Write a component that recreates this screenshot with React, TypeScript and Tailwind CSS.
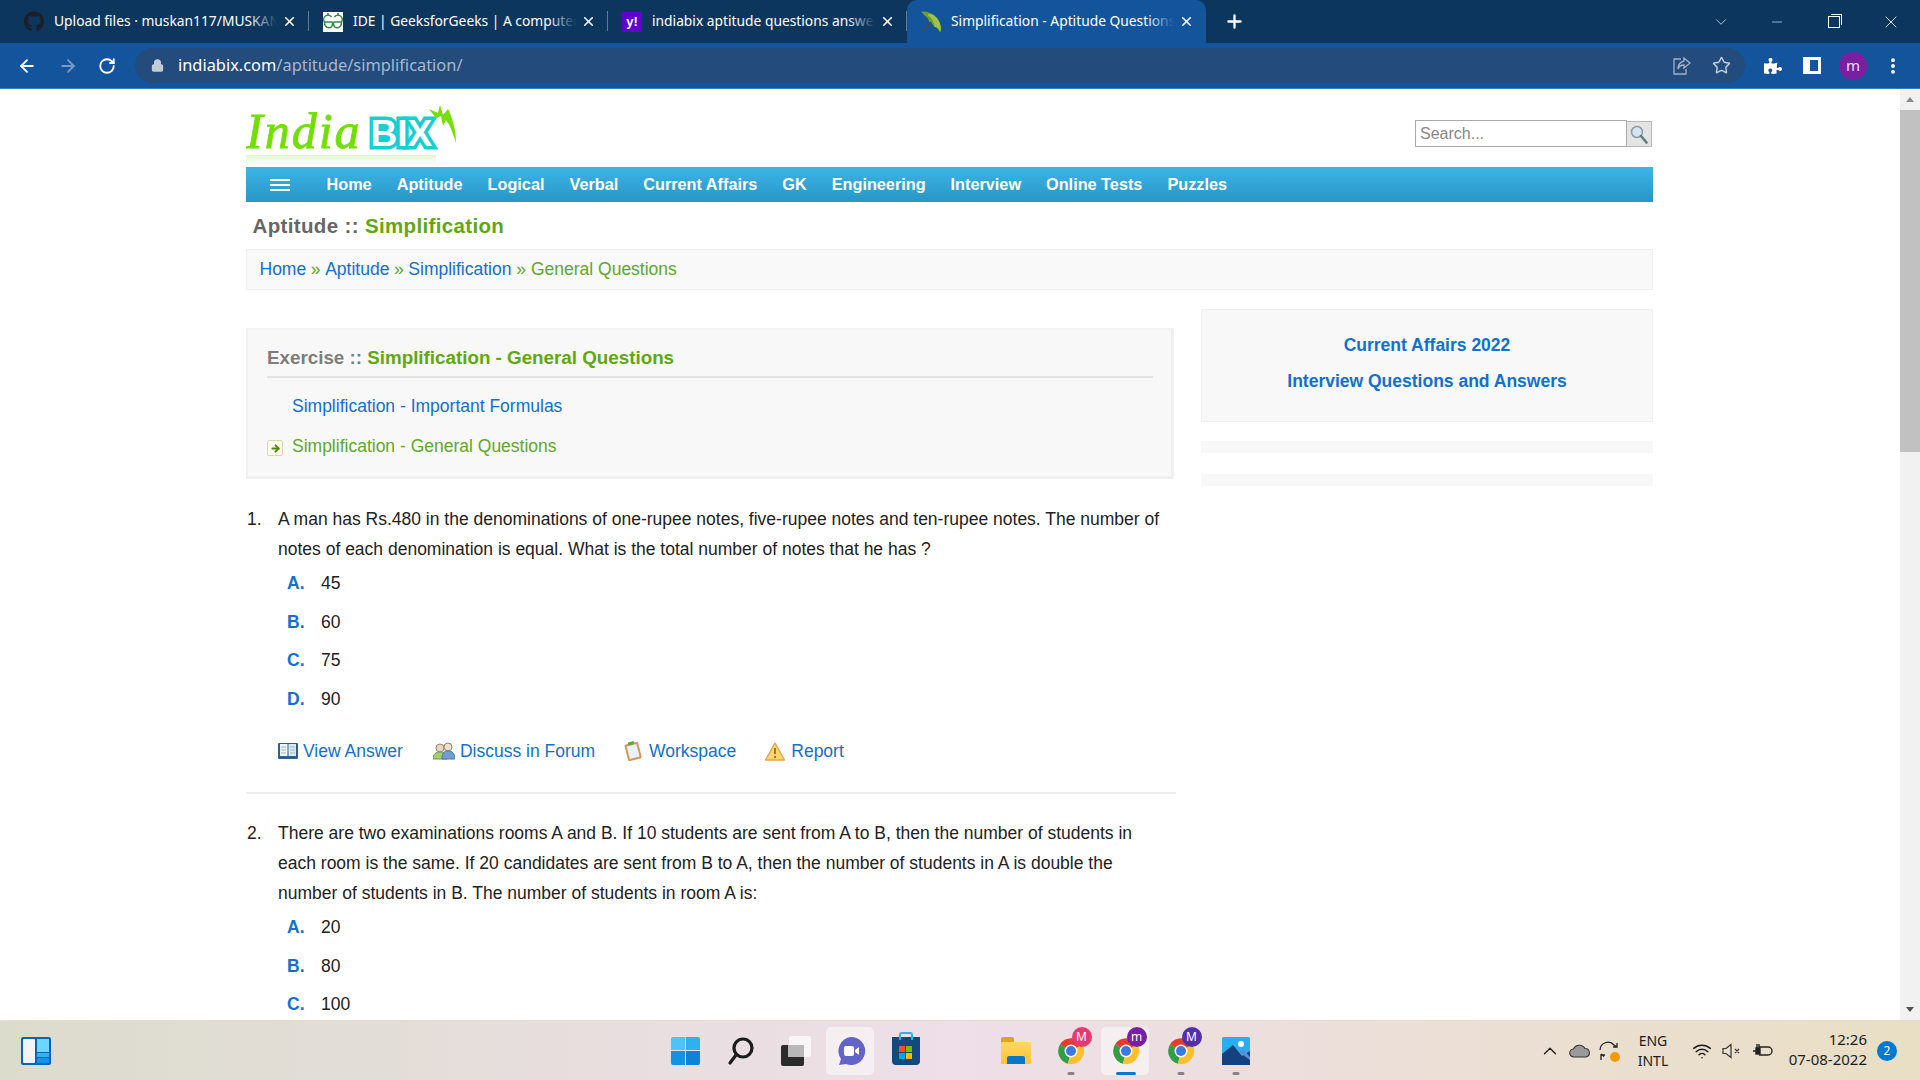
import React from "react";
import { FaGithub, FaPuzzlePiece } from "react-icons/fa";
import { ArrowLeft, ArrowRight, RotateCw, Lock, X, Plus, ChevronDown, Minus, Star, ChevronUp, Wifi, MoreVertical } from "lucide-react";

const GfgIcon = () => (
  <svg width="20" height="20" viewBox="0 0 20 20" className="bg-white shrink-0">
    <g fill="none" stroke="#2f8d46" strokeWidth="1.5">
      <path d="M9.500 10H1.500a4 4 0 0 1 7-5" />
      <path d="M10.500 10h8a4 4 0 0 0-7-5" />
      <path d="M1.500 10c0 7 8 8 8 1.500V10" />
      <path d="M18.500 10c0 7-8 8-8 1.500V10" />
      <path d="M5 1v3M15 1v3" />
    </g>
  </svg>
);

const Umbrella = () => (
  <svg width="22" height="24" viewBox="0 0 22 24" className="shrink-0">
    <path d="M1 2c7-2 16 3 20 15 .5 2 0 4-1 5-1-3-3-5-6-5-1-3-3-5-5-5 0-3-2-5-4-6-1-2-3-3-4-4z" fill="#6f9e2c" />
    <path d="M7 5c3 1 6 4 8 12 2 0 4 2 5 5 2-5 0-11-4-15-3-3-6-4-9-2z" fill="#9cc63f" />
    <path d="M11 12l-6 8c-1 1-2 1-3 0" fill="none" stroke="#454f40" strokeWidth="1.4" />
  </svg>
);

function Tab({ icon, title, active }: { icon: React.ReactNode; title: string; active?: boolean }) {
  return (
    <div className={"relative flex h-full w-[299px] items-center pl-[14px] pr-[10px] " + (active ? "rounded-t-[10px] bg-[#14549c]" : "")}>
      <div className="flex w-[20px] shrink-0 justify-center">{icon}</div>
      <div className="relative ml-[10px] -mt-[2px] h-[20px] w-[223px] overflow-hidden whitespace-nowrap text-[13.8px] leading-[20px] text-white">
        {title}
        <div className={"absolute inset-y-0 right-0 w-[28px] bg-gradient-to-r from-transparent " + (active ? "to-[#14549c]" : "to-[#0d365f]")} />
      </div>
      <X size={15} strokeWidth={2.6} className="ml-[5px] shrink-0 text-white" />
      {!active && <div className="absolute right-0 top-[11px] h-[20px] w-px bg-[#5d7c9b]" />}
    </div>
  );
}

function TabStrip() {
  return (
    <div className="flex h-[43px] items-end bg-[#0d365f] pl-[10px] font-['Noto_Sans',sans-serif]">
      <div className="flex h-[43px] items-center">
        <Tab icon={<FaGithub size={21} className="text-[#1b1f23]" />} title="Upload files · muskan117/MUSKAN" />
        <Tab icon={<GfgIcon />} title="IDE | GeeksforGeeks | A computer science" />
        <Tab
          icon={<div className="flex h-[20px] w-[20px] items-center justify-center bg-[#6001d2] font-['Liberation_Sans',sans-serif] text-[13px] font-bold leading-none text-white">y!</div>}
          title="indiabix aptitude questions answers"
        />
        <Tab active icon={<Umbrella />} title="Simplification - Aptitude Questions" />
      </div>
      <div className="flex h-[43px] w-[56px] items-center justify-center">
        <Plus size={21} strokeWidth={2.6} className="text-white" />
      </div>
      <div className="ml-auto flex h-[43px] items-center text-[#e6ecf2]">
        <div className="flex w-[57px] justify-center"><ChevronDown size={18} strokeWidth={1} /></div>
        <div className="flex w-[56px] justify-center"><Minus size={16} strokeWidth={1} /></div>
        <div className="flex w-[57px] justify-center">
          <div className="relative h-[12px] w-[12px] border border-white">
            <div className="absolute -right-[3px] -top-[3px] h-[11px] w-[11px] border-r border-t border-white" />
          </div>
        </div>
        <div className="flex w-[58px] justify-center"><X size={20} strokeWidth={1} className="text-white" /></div>
      </div>
    </div>
  );
}

function Toolbar() {
  return (
    <div className="flex h-[46px] items-center border-b border-[#3e78b8] bg-[#14549c] font-['Noto_Sans',sans-serif]">
      <div className="flex w-[135px] items-center">
        <div className="flex w-[54px] justify-center"><ArrowLeft size={20} strokeWidth={2.2} className="text-white" /></div>
        <div className="flex w-[28px] justify-center"><ArrowRight size={20} strokeWidth={2.2} className="text-[#7b9ac0]" /></div>
        <div className="flex w-[53px] justify-center"><RotateCw size={18} strokeWidth={2.4} className="-ml-[3px] text-white" /></div>
      </div>
      <div className="flex h-[35px] w-[1610px] items-center rounded-full bg-[#234b7c]">
        <Lock size={13} strokeWidth={3} className="ml-[16px] fill-[#c3cdd9] text-[#c3cdd9]" />
        <div className="ml-[14px] whitespace-nowrap text-[16.4px] text-white">
          indiabix.com<span className="text-[#a7b8cd]">/aptitude/simplification/</span>
        </div>
        <div className="ml-auto flex items-center pr-[14px]">
          <svg width="20" height="20" viewBox="0 0 20 20" fill="none" stroke="#9fb2c8" strokeWidth="1.3" className="mr-[20px]">
            <path d="M9 3H2v15h12v-5" />
            <path d="M12 2l6 5-6 5V9c-3 0-5 1-6 4 0-4 2-7 6-8z" />
          </svg>
          <Star size={19} strokeWidth={1.8} className="text-[#c3cfdc]" />
        </div>
      </div>
      <div className="flex flex-1 items-center">
        <div className="ml-[18px] flex w-[20px] justify-center"><FaPuzzlePiece size={18} className="text-white" /></div>
        <div className="ml-[20px] h-[17px] w-[18px] border-[3px] border-l-[7px] border-white bg-[#14549c]" />
        <div className="ml-[18px] flex h-[28px] w-[28px] items-center justify-center rounded-full bg-[#7b1fa2] text-[15px] leading-none text-[#f0def5]">m</div>
        <MoreVertical size={20} strokeWidth={2.6} className="ml-[16px] text-white" />
      </div>
    </div>
  );
}

const Logo = () => (
  <div className="relative h-[65px] w-[211px] overflow-hidden">
    <div className="flex h-[54px] items-end">
      <span className="font-['Liberation_Serif',serif] text-[50px] italic leading-[46px] tracking-[2px] text-[#70e000] [-webkit-text-stroke:0.8px_#70e000]">India</span>
      <span className="ml-[9px] font-['Liberation_Sans',sans-serif] text-[37px] font-bold leading-[40px] text-white [paint-order:stroke_fill] [-webkit-text-stroke:7px_#15cfd2]">BIX</span>
    </div>
    <svg width="30" height="40" viewBox="0 0 30 40" className="absolute right-0 top-[3px]">
      <path d="M2 6l9 4 2-8 3 10 5-6c5 10 8 22 8 34-3-10-6-18-10-23l-3 6-2-10-5 2z" fill="#74e000" />
    </svg>
    <div className="absolute left-0 top-[55px] h-[10px] w-[190px] bg-gradient-to-b from-[#e3f7d0] to-white" />
  </div>
);

const navItems = ["Home", "Aptitude", "Logical", "Verbal", "Current Affairs", "GK", "Engineering", "Interview", "Online Tests", "Puzzles"];

const blue = "text-[#1270cf]";

function Opt({ l, v }: { l: string; v: string }) {
  return (
    <div className="flex h-[38.5px] items-center pl-[9px]">
      <span className={"w-[34px] font-bold " + blue}>{l}</span>
      <span>{v}</span>
    </div>
  );
}

const BookIcon = () => (
  <svg width="20" height="18" viewBox="0 0 20 18">
    <rect x="0" y="1" width="20" height="16" rx="1" fill="#2d5f92" />
    <rect x="2" y="2" width="7.500" height="12" fill="#eef3f8" />
    <rect x="10.500" y="2" width="7.500" height="12" fill="#dfe8f1" />
    <path d="M3 5h5M3 8h5M3 11h5M12 5h5M12 8h5M12 11h5" stroke="#9bb" strokeWidth="1" />
  </svg>
);
const PeopleIcon = () => (
  <svg width="22" height="18" viewBox="0 0 22 18">
    <circle cx="7" cy="6" r="4" fill="#f0d6b8" stroke="#8a8a80" />
    <path d="M0 17c0-5 3-7 7-7s7 2 7 7z" fill="#a2d06a" stroke="#7a8a66" />
    <circle cx="15" cy="5" r="4" fill="#f3ddc3" stroke="#8a8a80" />
    <path d="M9 17c0-6 2-8 6-8s7 2 7 8z" fill="#6e9fd6" stroke="#54759c" />
  </svg>
);
const NoteIcon = () => (
  <svg width="20" height="20" viewBox="0 0 20 20">
    <g transform="rotate(-14 10 10)">
      <rect x="3" y="2" width="14" height="17" rx="1.500" fill="#d9955a" />
      <rect x="5" y="4" width="10" height="13" fill="#e6f2f5" />
      <rect x="7" y="0.500" width="6" height="3" fill="#4fae4a" />
    </g>
  </svg>
);
const WarnIcon = () => (
  <svg width="20" height="19" viewBox="0 0 20 19">
    <path d="M10 1l9.500 17H.5z" fill="#f7d774" stroke="#e2a84a" strokeWidth="1.400" strokeLinejoin="round" />
    <path d="M10 6v6" stroke="#b27318" strokeWidth="2" />
    <circle cx="10" cy="15" r="1.200" fill="#b27318" />
  </svg>
);

function Links() {
  return (
    <div className={"mt-[18px] flex h-[30px] items-center pl-[32px] " + blue}>
      <BookIcon />
      <span className="ml-[5px]">View Answer</span>
      <div className="ml-[30px]"><PeopleIcon /></div>
      <span className="ml-[5px]">Discuss in Forum</span>
      <div className="ml-[28px]"><NoteIcon /></div>
      <span className="ml-[6px]">Workspace</span>
      <div className="ml-[29px]"><WarnIcon /></div>
      <span className="ml-[6px]">Report</span>
    </div>
  );
}

function Question({ n, lines }: { n: string; lines: string }) {
  return (
    <div className="flex leading-[30px]">
      <div className="w-[32px] shrink-0 pl-[1px]">{n}</div>
      <div className="w-[888px]">{lines}</div>
    </div>
  );
}

function LeftCol() {
  return (
    <div className="w-[928px] pt-[38px] text-[#222]">
      <div className="h-[151px] border-2 border-b-[3px] border-r-[3px] border-[#f0f0f0] border-t-[#f3f3f3] bg-[#f8f8f8] pl-[19px] pr-[18px]">
        <div className="flex h-[48px] items-end border-b-2 border-[#e2e2e2] pb-[5px] text-[18.8px] font-bold leading-[26px] text-[#7d7d7d]">
          <span>Exercise ::&nbsp;</span><span className="text-[#5fa80e]">Simplification - General Questions</span>
        </div>
        <div className={"mt-[8px] h-[40px] pl-[25px] leading-[40px] " + blue}>Simplification - Important Formulas</div>
        <div className="flex h-[40px] items-center text-[#5fa82a]">
          <div className="mt-[4px] flex h-[16px] w-[16px] items-center justify-center rounded-[2px] border border-[#d8d8b0] bg-[#fcfce8]">
            <ArrowRight size={11} strokeWidth={4} className="text-[#4d8a10]" />
          </div>
          <span className="ml-[9px]">Simplification - General Questions</span>
        </div>
      </div>
      <div className="mt-[25px]">
        <Question n="1." lines="A man has Rs.480 in the denominations of one-rupee notes, five-rupee notes and ten-rupee notes. The number of notes of each denomination is equal. What is the total number of notes that he has ?" />
        <div className="pl-[32px]">
          <Opt l="A." v="45" /><Opt l="B." v="60" /><Opt l="C." v="75" /><Opt l="D." v="90" />
        </div>
        <Links />
        <div className="mt-[26px] h-[2px] w-[930px] bg-[#eeeeee]" />
      </div>
      <div className="mt-[24px]">
        <Question n="2." lines="There are two examinations rooms A and B. If 10 students are sent from A to B, then the number of students in each room is the same. If 20 candidates are sent from B to A, then the number of students in A is double the number of students in B. The number of students in room A is:" />
        <div className="pl-[32px]">
          <Opt l="A." v="20" /><Opt l="B." v="80" /><Opt l="C." v="100" /><Opt l="D." v="200" />
        </div>
      </div>
    </div>
  );
}

function RightCol() {
  return (
    <div className="ml-[27px] w-[452px] pt-[19px]">
      <div className={"flex h-[113px] flex-col items-center justify-center gap-[11px] border border-[#f0f0f0] bg-[#f8f8f8] pb-[5px] font-bold leading-[25px] " + blue}>
        <div>Current Affairs 2022</div>
        <div>Interview Questions and Answers</div>
      </div>
      <div className="mt-[19px] h-[12px] bg-[#f8f8f8]" />
      <div className="mt-[21px] h-[12px] bg-[#f8f8f8]" />
    </div>
  );
}

function Page() {
  return (
    <div className="h-full flex-1 overflow-hidden bg-white font-['Liberation_Sans',sans-serif] text-[17.5px]">
      <div className="ml-[246px] w-[1407px]">
        <div className="flex h-[78px] items-start justify-between pt-[11px]">
          <Logo />
          <div className="mr-[1px] mt-[20px] flex items-end">
            <div className="flex h-[27px] w-[212px] items-center border border-[#aaaaaa] pl-[4px] text-[16px] text-[#888]">Search...</div>
            <div className="flex h-[26px] w-[25px] items-center justify-center border border-l-0 border-[#b8b8b8] bg-[#e4e4e4]">
              <svg width="18" height="19" viewBox="0 0 18 19">
                <circle cx="7" cy="7" r="5.500" fill="#d6e4f2" stroke="#8a9aa0" strokeWidth="1.500" />
                <path d="M11 11l5.500 6.500" stroke="#5f8078" strokeWidth="2.600" strokeLinecap="round" />
              </svg>
            </div>
          </div>
        </div>
        <div className="flex h-[35px] items-center bg-gradient-to-b from-[#3bb5e6] to-[#2896c6] text-[16.25px] font-bold text-white">
          <div className="ml-[24px] flex w-[20px] flex-col gap-[3px]">
            <div className="h-[2px] bg-white" />
            <div className="h-[2px] bg-white" />
            <div className="h-[2px] bg-white" />
          </div>
          <div className="ml-[36.500px] flex gap-[25px]">
            {navItems.map((n) => <span key={n}>{n}</span>)}
          </div>
        </div>
        <div className="flex h-[47px] items-center pl-[6.500px] pt-[2px] text-[20.5px] font-bold tracking-[0.35px] text-[#666]">
          <span>Aptitude ::&nbsp;</span><span className="text-[#5fa80e]">Simplification</span>
        </div>
        <div className={"flex h-[41px] items-center border border-[#f0f0f0] bg-[#f9f9f9] pl-[12.500px] " + blue}>
          <span>Home</span><span className="-mx-[0.25px] text-[#5fa82a]">&nbsp;»&nbsp;</span>
          <span>Aptitude</span><span className="-mx-[0.25px] text-[#5fa82a]">&nbsp;»&nbsp;</span>
          <span>Simplification</span><span className="text-[#5fa82a]">&nbsp;»&nbsp;General Questions</span>
        </div>
        <div className="flex items-start">
          <LeftCol />
          <RightCol />
        </div>
      </div>
    </div>
  );
}

function Scrollbar() {
  return (
    <div className="flex h-full w-[20px] shrink-0 flex-col bg-[#f1f1f1]">
      <div className="flex h-[21px] items-center justify-center">
        <div className="h-0 w-0 border-x-[4px] border-b-[5px] border-x-transparent border-b-[#8a8a8a]" />
      </div>
      <div className="h-[342px] bg-[#c1c1c1]" />
      <div className="mt-auto flex h-[21px] items-center justify-center">
        <div className="h-0 w-0 border-x-[4px] border-t-[5px] border-x-transparent border-t-[#505050]" />
      </div>
    </div>
  );
}

const ChromeIcon = ({ badge, color }: { badge: string; color: string }) => (
  <div className="relative h-[30px] w-[30px]">
    <svg width="28" height="28" viewBox="0 0 28 28" className="absolute left-[1px] top-[1px]">
      <path d="M14 14L3 7.500A13 13 0 0 1 25.300 7.500z" fill="#e33b2e" />
      <path d="M14 14L3 7.500A13 13 0 0 0 11 26.700z" fill="#2f9e44" />
      <path d="M14 14l11.300-6.500A13 13 0 0 1 11 26.700z" fill="#fbc02d" />
      <circle cx="14" cy="14" r="6.500" fill="#fff" />
      <circle cx="14" cy="14" r="5" fill="#3b78e7" />
    </svg>
    <div className={"absolute -right-[6px] -top-[9px] flex h-[20px] w-[20px] items-center justify-center rounded-full text-[12px] leading-none text-white " + color}>{badge}</div>
  </div>
);

const Dot = ({ active }: { active?: boolean }) => (
  <div className={"absolute bottom-[6px] left-1/2 h-[3px] -translate-x-1/2 rounded-full " + (active ? "w-[20px] bg-[#0078d4]" : "w-[7px] bg-[#85808a]")} />
);

function Slot({ children, hi, dot, active }: { children?: React.ReactNode; hi?: boolean; dot?: boolean; active?: boolean }) {
  return (
    <div className="relative flex h-[60px] w-[55px] items-center justify-center">
      {hi && <div className="absolute left-[3px] top-[6px] h-[48px] w-[48px] rounded-[5px] bg-white/50" />}
      <div className="relative flex items-center justify-center">{children}</div>
      {dot && <Dot active={active} />}
    </div>
  );
}

function Taskbar() {
  return (
    <div className="flex h-[60px] items-center border-t border-[#e3ddd0] bg-gradient-to-r from-[#dcdccd] via-[#eedfe8] to-[#e9dfc4] font-['Noto_Sans',sans-serif] text-[#222]">
      <div className="ml-[21px] flex h-[28px] w-[30px] gap-[2px] rounded-[2px] bg-[#0a63b4] p-[2px]">
        <div className="w-[12px] rounded-[1px] bg-[#f3f3f3]" />
        <div className="flex flex-1 flex-col gap-px">
          <div className="flex-[3] bg-[#6dd6ff]" />
          <div className="flex-1 bg-[#31b2f5]" />
          <div className="flex-1 bg-[#1493e8]" />
        </div>
      </div>
      <div className="ml-[607px] flex">
        <Slot>
          <div className="grid h-[28px] w-[29px] grid-cols-2 gap-[1px]">
            <div className="rounded-tl-[2px] bg-[#4cc4f7]" /><div className="rounded-tr-[2px] bg-[#2fb0f0]" />
            <div className="rounded-bl-[2px] bg-[#1493e6]" /><div className="rounded-br-[2px] bg-[#0e82d8]" />
          </div>
        </Slot>
        <Slot>
          <svg width="28" height="30" viewBox="0 0 28 30" fill="none" stroke="#1c1c1c" strokeWidth="3.200" strokeLinecap="round">
            <circle cx="16" cy="12" r="9" /><path d="M9 19l-6 8" />
          </svg>
        </Slot>
        <Slot>
          <div className="relative h-[30px] w-[30px]">
            <div className="absolute bottom-0 left-0 h-[21px] w-[23px] rounded-[2px] bg-[#2b2b2b]" />
            <div className="absolute right-0 top-0 h-[21px] w-[22px] rounded-[2px] bg-white/70" />
            <div className="absolute left-[7px] top-[9px] h-[12px] w-[16px] bg-[#b8b8b8]" />
          </div>
        </Slot>
        <Slot hi>
          <svg width="30" height="30" viewBox="0 0 30 30">
            <path d="M15 1a14 14 0 1 1-5 27l-7 1 2-6A14 14 0 0 1 15 1z" fill="#6264c8" />
            <rect x="8" y="10" width="10" height="10" rx="2" fill="#fff" />
            <path d="M19 14l4-3v8l-4-3z" fill="#fff" />
          </svg>
        </Slot>
        <Slot>
          <div className="relative h-[28px] w-[28px] rounded-b-[4px] bg-[#13497c] pt-[9px]">
            <div className="absolute -top-[5px] left-[7px] h-[8px] w-[14px] rounded-t-[3px] border-2 border-b-0 border-[#26b5ea]" />
            <div className="mx-auto grid h-[13px] w-[13px] grid-cols-2 gap-px">
              <div className="bg-[#f25022]" /><div className="bg-[#7fba00]" /><div className="bg-[#00a4ef]" /><div className="bg-[#ffb900]" />
            </div>
          </div>
        </Slot>
        <Slot />
        <Slot>
          <div className="relative h-[27px] w-[30px]">
            <div className="absolute left-0 top-0 h-[8px] w-[13px] rounded-t-[2px] bg-[#e0a415]" />
            <div className="absolute bottom-0 left-0 h-[22px] w-[30px] rounded-[1px] bg-gradient-to-b from-[#ffd75e] to-[#fcc330]" />
            <div className="absolute bottom-0 left-[6px] h-[8px] w-[18px] rounded-t-[2px] bg-[#0a78c8]" />
          </div>
        </Slot>
        <Slot dot><ChromeIcon badge="M" color="bg-[#e8386f]" /></Slot>
        <Slot hi dot active><ChromeIcon badge="m" color="bg-[#7b1fa2]" /></Slot>
        <Slot dot><ChromeIcon badge="M" color="bg-[#5231a8]" /></Slot>
        <Slot dot>
          <svg width="28" height="28" viewBox="0 0 28 28">
            <rect width="28" height="28" rx="1.500" fill="#29aef0" />
            <circle cx="19" cy="7" r="3" fill="#fff" />
            <path d="M0 28V17l11-9 9 11 8-5v14z" fill="#15427e" />
            <path d="M17 15l4-3 7 8v3z" fill="#5a8fd8" />
          </svg>
        </Slot>
      </div>
      <div className="ml-[276px] flex items-center text-[#1d1d1d]">
        <ChevronUp size={22} strokeWidth={1.4} />
        <svg width="22" height="14" viewBox="0 0 22 14" className="ml-[8px]">
          <path d="M5 13a4 4 0 0 1-.5-8A6.500 6.500 0 0 1 16 4.500a4.300 4.300 0 0 1 1 8.500z" fill="#9a9a9a" stroke="#333" strokeWidth="1.100" />
        </svg>
        <div className="relative ml-[7px] h-[22px] w-[22px]">
          <svg width="22" height="22" viewBox="0 0 22 22" fill="none" stroke="#222" strokeWidth="1.300">
            <path d="M2 10a8 8 0 0 1 14-5l3 2M19 3v4h-4M3 14l3 2.500M3 20v-5h4" />
          </svg>
          <div className="absolute bottom-0 right-0 h-[10px] w-[10px] rounded-full bg-[#f59a0c]" />
        </div>
        <div className="ml-[15px] w-[36px] text-center text-[14px] leading-[20px]">ENG<br />INTL</div>
        <Wifi size={20} strokeWidth={1.8} className="ml-[21px]" />
        <svg width="20" height="16" viewBox="0 0 20 16" fill="none" stroke="#333" strokeWidth="1.200" className="ml-[10px]">
          <path d="M1 5.500h3l5-4v13l-5-4H1zM13 6l4 4M17 6l-4 4" />
        </svg>
        <svg width="20" height="16" viewBox="0 0 20 16" fill="none" stroke="#222" strokeWidth="1.400" className="ml-[11px]">
          <path d="M0 8h4M6 4h9a3 3 0 0 1 0 8H6" />
          <rect x="3" y="5" width="4" height="6" fill="#222" />
          <path d="M4 1v4M6 1v4" />
        </svg>
        <div className="-mt-[3px] ml-[7px] w-[87px] text-right text-[15px] leading-[20px]">12:26<br />07-08-2022</div>
        <div className="ml-[10px] flex h-[20px] w-[20px] items-center justify-center rounded-full bg-[#0078d4] text-[12px] text-white">2</div>
      </div>
    </div>
  );
}

export default function App() {
  return (
    <div className="flex h-[1080px] w-[1920px] flex-col overflow-hidden bg-white">
      <TabStrip />
      <Toolbar />
      <div className="flex h-[931px]">
        <Page />
        <Scrollbar />
      </div>
      <Taskbar />
    </div>
  );
}
